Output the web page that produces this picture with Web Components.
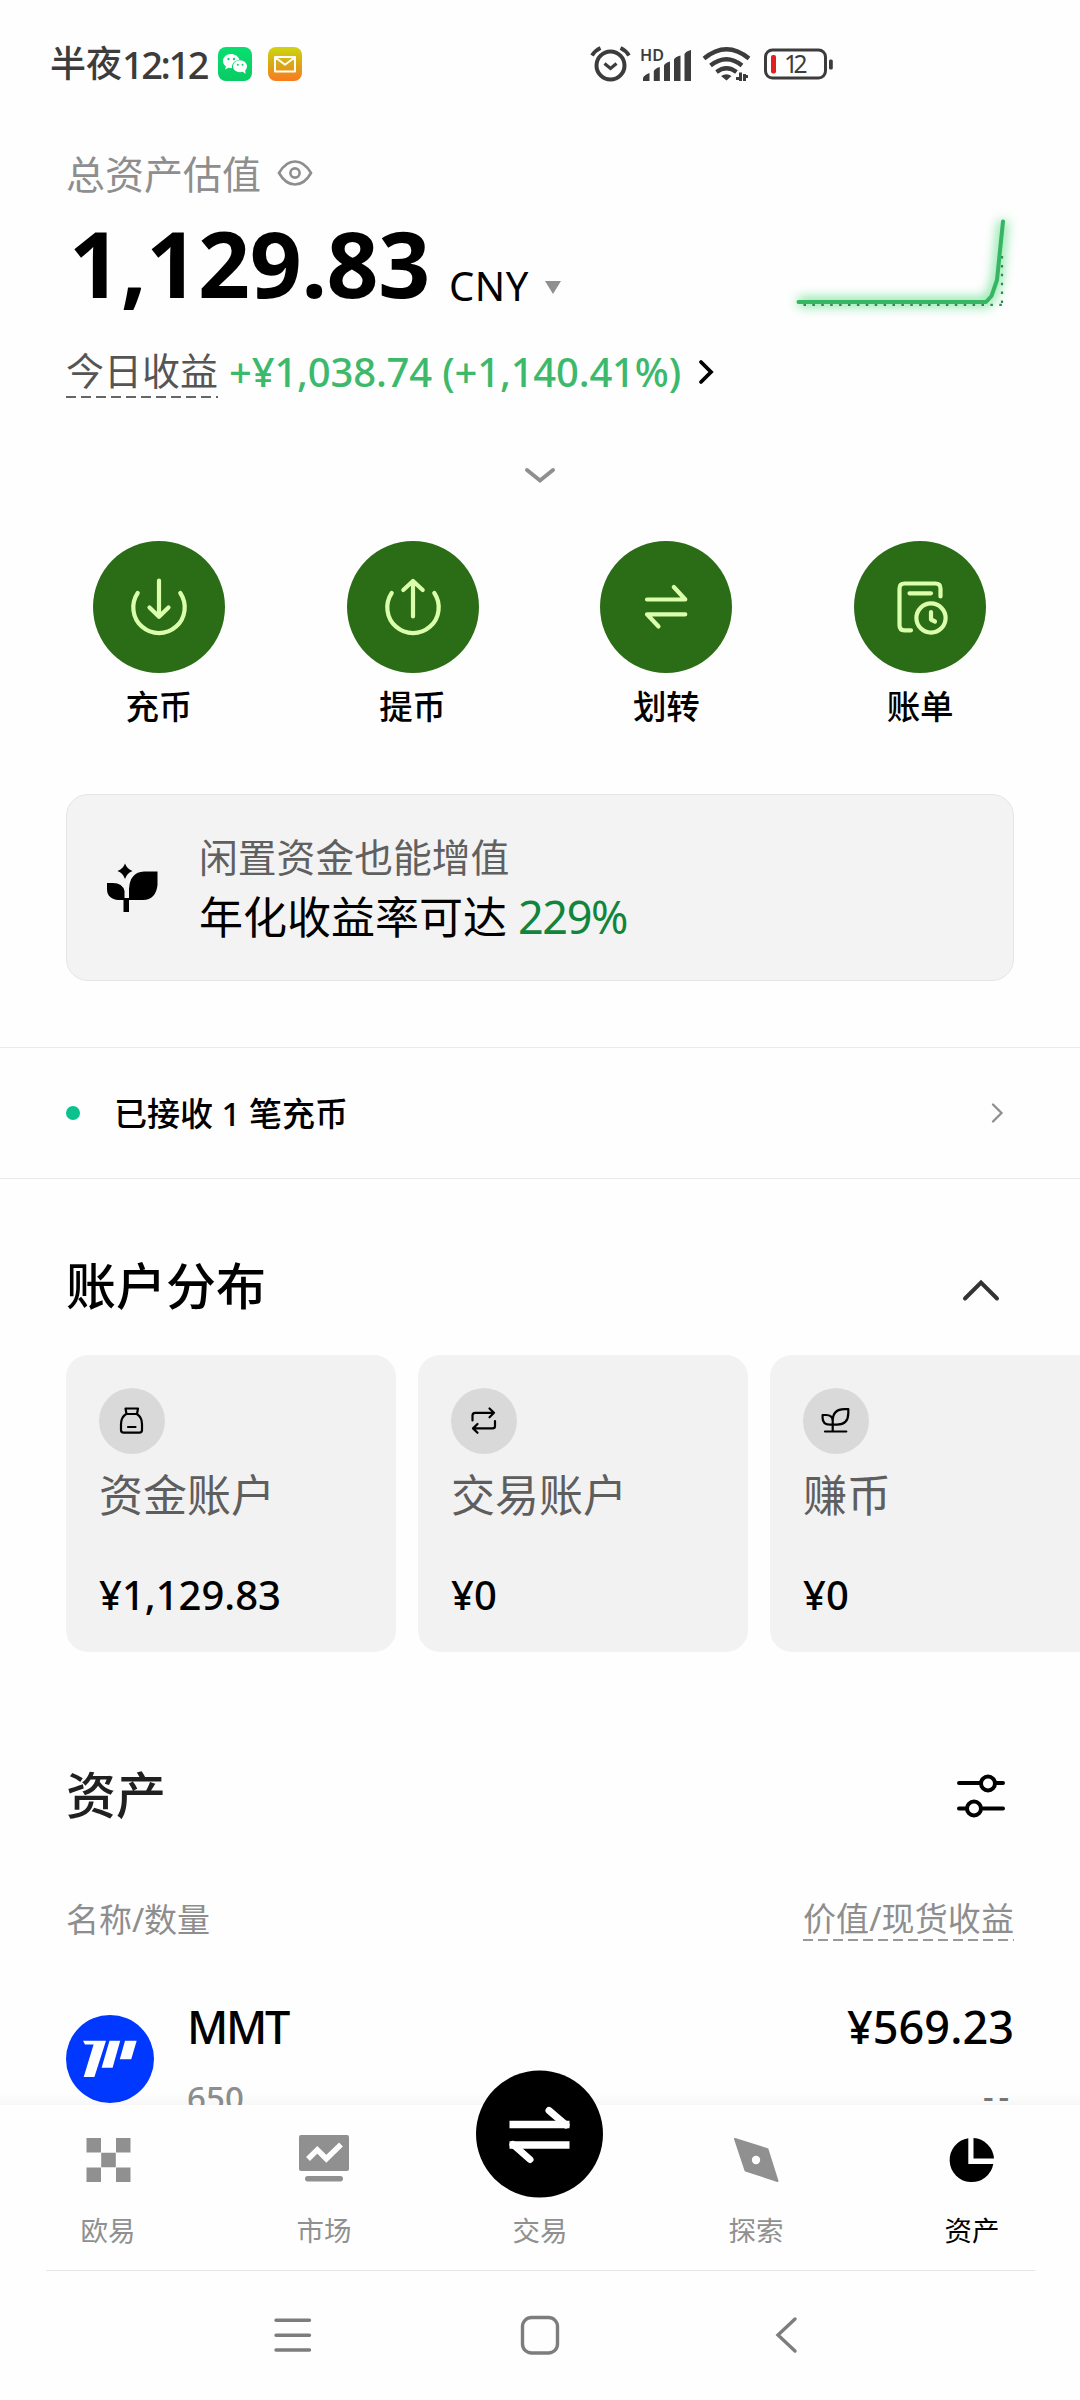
<!DOCTYPE html>
<html lang="zh-CN">
<head>
<meta charset="utf-8">
<title>资产</title>
<style>
html,body{margin:0;padding:0;background:#fefefe}
body{width:1080px;height:2400px;overflow:hidden;font-family:"Noto Sans","Noto Sans CJK SC",sans-serif;color:#000;line-height:1}
</style>
</head>
<body>
<wallet-app></wallet-app>
<script>
const define = (name, css, html, after) => customElements.define(name, class extends HTMLElement {
  constructor() {
    super();
    this.attachShadow({mode: 'open'});
  }
  connectedCallback() {
    const attr = n => this.getAttribute(n) || '';
    this.shadowRoot.innerHTML = `<style>:host{display:block;box-sizing:border-box}*{box-sizing:border-box}svg{display:block;flex:none;overflow:visible}${css}</style>` + (typeof html === 'function' ? html(attr) : html);
    if (after) after(this);
  }
});

const ICONS = {
  deposit: '<path d="M44.7 52A25.7 25.7 0 1 0 87.3 52M66 39.5V75.5M56.5 66.5L66 75.8L75.5 66.5"/>',
  withdraw: '<path d="M44.7 52A25.7 25.7 0 1 0 87.3 52M66 75.5V40M56.3 49L66 40L75.7 49"/>',
  transfer: '<path d="M47 58.5H85.3L73.8 46M85.3 73.3H47L58.5 85.5"/>',
  bill: '<path d="M86.5 55.5V47.5Q86.5 42.5 81.5 42.5H50.5Q45.5 42.5 45.5 47.5V84.3Q45.5 89.3 50.5 89.3H57M55.5 52.3H77M77 71V78.5L81 80.5"/><circle cx="77" cy="77" r="14.6"/>',
  jar: '<path d="M26.5 20.5H39L38 26H27.5ZM27.5 25.7Q22 29 22 36V42Q22 44.7 24.7 44.7H40.3Q43 44.7 43 42V36Q43 29 37.5 25.7M29 39H36.5"/>',
  swap: '<path d="M21.5 32.5V27.5Q21.5 24.8 24.2 24.8H43M38.5 20.5L43 24.8L38.5 29.3M44 33V38Q44 40.4 41.5 40.4H22M26.5 36L22 40.4L26.5 44.8"/>',
  sprout: '<path d="M29.7 43.3V33Q29.7 21.2 41.5 21.2H45.3V25Q45.3 36.6 34 36.6H27Q19.6 36.6 19.6 30V27H23Q29.7 27 29.7 33M22 43.5H43.3"/>'
};

/* Text whose letter spacing adapts so the run takes the width in "w" */
define('ui-text', ':host{display:inline-block;white-space:pre}', '<span><slot></slot></span>', el => {
  const w = parseFloat(el.getAttribute('w'));
  if (!w) return;
  const natural = el.shadowRoot.querySelector('span').getBoundingClientRect().width;
  el.style.letterSpacing = ((w - natural) / [...el.textContent].length) + 'px';
});

define('status-bar', `
:host{height:126px;display:flex;align-items:center;padding:2px 0 0 50px;color:#3c3c3c}
.time{font-size:36px;font-weight:500;display:flex;align-items:center;line-height:40px}
.time ui-text{font-size:38px}
.apps{display:flex;gap:16px;margin-left:11px}
.sys{display:flex;align-items:center;margin-left:289px}
`, `
<div class="time">半夜<ui-text w="85">12:12</ui-text></div>
<div class="apps">
<svg width="34" height="34" viewBox="0 0 34 34"><defs><linearGradient id="w" x2="0" y2="1"><stop stop-color="#08df70"/><stop offset="1" stop-color="#08cb64"/></linearGradient></defs><rect width="34" height="34" rx="8" fill="url(#w)"/><path d="M13 7C8.300 7 5 10.300 5 14c0 2.200 1 4.100 3 5.400L7 22.500l3.500-1.700c1 .3 2.200.4 3.500.3-.5-4.500 2.600-8 7.500-8.200C20.500 9.300 17 7 13 7Z" fill="#fff"/><ellipse cx="22" cy="19.300" rx="7" ry="6" fill="#fff"/><path d="M24 24l3.500 3-.3-4.500Z" fill="#fff"/><g fill="#08d56a"><circle cx="10.500" cy="12" r="1.200"/><circle cx="16" cy="12" r="1.200"/><circle cx="19.800" cy="17.800" r="1"/><circle cx="24.500" cy="17.800" r="1"/></g></svg>
<svg width="34" height="34" viewBox="0 0 34 34"><defs><linearGradient id="m" x2="0" y2="1"><stop stop-color="#cfd511"/><stop offset=".5" stop-color="#d9a918"/><stop offset="1" stop-color="#fa7a1e"/></linearGradient></defs><rect width="34" height="34" rx="8" fill="url(#m)"/><path d="M7 10H27V24.500H7ZM7.500 10.500L17 17.800L26.500 10.500" fill="none" stroke="#fff" stroke-width="1.900" stroke-linejoin="round"/></svg>
</div>
<div class="sys">
<svg width="39" height="36" viewBox="0 0 39 36" fill="none" stroke="#3c3c3c" stroke-width="4"><circle cx="19.500" cy="19.500" r="14"/><path d="M13.500 17.500L19.500 22.500L25.500 17.500" stroke-width="3.200"/><path d="M1 9.500Q4 4.500 9.500 2M38 9.500Q35 4.500 29.500 2" stroke-width="3.800"/></svg>
<svg width="52" height="36" viewBox="0 0 52 36" style="margin-left:10px" fill="#3c3c3c"><text x="0" y="14.500" font-size="16" font-weight="600" textLength="24" lengthAdjust="spacingAndGlyphs" font-family="Noto Sans">HD</text><path d="M3 32.500Q3 29.500 9.500 27V35H3ZM13.800 25.500Q14.500 22.500 19.800 21V35H13.800ZM24 19.500Q25 16.800 30 15.500V35H24ZM34 13.500Q35 10.800 40.500 9.500V35H34ZM44.500 8Q46 5 51 4V35H44.500Z"/></svg>
<svg width="47" height="36" viewBox="0 0 47 36" style="margin-left:11px" fill="none" stroke="#3c3c3c" stroke-width="4.300"><path d="M1 12.500Q23.500-6 46 12.500M7.500 19.500Q23.500 7 39 19.500M13.500 26Q23.500 18.500 33.500 26"/><path d="M18 30Q23.500 26.500 28.500 30L23.500 34.500Z" fill="#3c3c3c" stroke="none"/><path d="M37.500 26.500V35M33 32.500H37.500M41.500 35V28M41.500 30.500H45" stroke-width="3"/></svg>
<svg width="70" height="36" viewBox="0 0 70 36" style="margin-left:14px"><rect x="1.500" y="4" width="60" height="28" rx="7" fill="none" stroke="#3c3c3c" stroke-width="3"/><rect x="7" y="9" width="5" height="18.500" rx="2" fill="#e02020"/><rect x="65" y="13.500" width="3.800" height="10" rx="1.500" fill="#3c3c3c"/><text x="20" y="26.700" font-size="24.500" textLength="23.500" fill="#3c3c3c" font-family="Noto Sans">12</text></svg>
</div>`);

define('asset-summary', `
:host{padding:24px 66px 0;height:378px}
.label{display:flex;align-items:center;height:46px;font-size:39px;color:#8e8e8e;gap:16px}
.value{display:flex;align-items:baseline;height:100px;margin-top:20px;line-height:100px}
.num{font-size:91px;font-weight:700;margin-left:3px;transform:translateY(-3px)}
.cur{font-size:40px;margin-left:19px}
.tri{width:0;height:0;border:8.500px solid transparent;border-top:13px solid #8f8f8f;border-bottom:0;margin-left:16px;align-self:flex-start;margin-top:65px}
.chart{margin-left:auto;align-self:flex-start}
.today{display:flex;align-items:center;margin-top:30px;height:52px;font-size:38px;color:#555}
.dash{height:52px;line-height:49px;width:152px;background:repeating-linear-gradient(90deg,#666 0 10px,transparent 10px 15px) left bottom/100% 2px no-repeat}
.gain{font-size:40px;color:#3cb96b;font-weight:500;margin-left:11px;line-height:52px}
.today svg{margin-left:17px}
.more{display:block;margin:69px auto 0}
`, `
<div class="label"><span>总资产估值</span><svg width="36" height="28" viewBox="0 0 36 28" fill="none" stroke="#8e8e8e" stroke-width="2.600"><path d="M2 14C6 7 11.500 2.500 18 2.500S30 7 34 14C30 21 24.500 25.500 18 25.500S6 21 2 14Z"/><circle cx="18" cy="14" r="4.600"/></svg></div>
<div class="value"><ui-text class="num" w="361">1,129.83</ui-text><ui-text class="cur" w="80">CNY</ui-text><i class="tri"></i>
<svg class="chart" width="234" height="100" viewBox="780 216 234 100"><defs><filter id="g" x="-20%" y="-40%" width="140%" height="180%"><feGaussianBlur stdDeviation="5.500"/></filter></defs><path d="M798 302H986L991 297L997 280L1003 221" fill="none" stroke="#5fdc88" stroke-width="10" opacity=".75" filter="url(#g)"/><path d="M803.500 304.800H1003M1002 303V256" fill="none" stroke="#2d8a50" stroke-width="2.200" stroke-dasharray="2.500 6.400"/><path d="M798.500 302H986L991.500 296L997 280L1003 221.500" fill="none" stroke="#36b562" stroke-width="4" stroke-linecap="round" stroke-linejoin="round"/></svg></div>
<div class="today"><span class="dash">今日收益</span><ui-text class="gain" w="452">+¥1,038.74 (+1,140.41%)</ui-text><svg width="16" height="26" viewBox="0 0 16 26"><path d="M3 3L13 13L3 23" fill="none" stroke="#000" stroke-width="3.800" stroke-linecap="round"/></svg></div>
<svg class="more" width="32" height="18" viewBox="0 0 32 18"><path d="M3 3L16 13.500L29 3" fill="none" stroke="#8f8f8f" stroke-width="4" stroke-linecap="round"/></svg>`);

define('quick-action', `
:host{flex:1;display:flex;flex-direction:column;align-items:center;gap:12.500px;font-size:33.500px;font-weight:500;line-height:40px}
svg{background:#2b6c17;border-radius:50%}
span{height:41.500px}
`, a => `<svg width="132" height="132" viewBox="0 0 132 132" fill="none" stroke="#dcffab" stroke-width="4.200" stroke-linecap="round" stroke-linejoin="round">${ICONS[a('icon')]}</svg><span><slot></slot></span>`);

define('promo-banner', `
:host{margin:67px 66px 0;height:187px;border-radius:22px;background:#f3f3f3;border:1.500px solid #e5e5e5;display:flex;align-items:center;padding-left:39px}
.t{margin:3px 0 0 41px;display:flex;flex-direction:column;font-size:38.800px;color:#606060}
.t span{line-height:56px}
.b{font-size:44px;color:#000;line-height:64px!important;display:flex}
ui-text{color:#11853b;font-size:45px;margin-left:11px}
`, `<svg width="52" height="50" viewBox="106 862 52 50"><path d="M125 862.500Q127 868 132.500 870Q127 872 125 878Q123 872 117.500 870Q123 868 125 862.500ZM129 899V888Q130 871 144 870.500H157.500V884Q156 898.500 143 899ZM123.500 899Q107 900 107 888V882H113Q122.500 882 124.500 890V899ZM123.500 897H129V911H123.500Z"/></svg><div class="t"><span>闲置资金也能增值</span><span class="b">年化收益率可达<ui-text w="109">229%</ui-text></span></div>`);

define('notice-row', `
:host{margin-top:66px;height:132px;border:solid #eaeaea;border-width:1.500px 0;display:flex;align-items:center;padding:0 76px 0 66px;font-size:33px;font-weight:500}
i{width:14px;height:14px;border-radius:50%;background:#0bc18d;margin-right:34px}
svg{margin-left:auto}
`, `<i></i><ui-text w="233"><slot></slot></ui-text><svg width="14" height="22" viewBox="0 0 14 22"><path d="M3 2.500L11.500 11L3 19.500" fill="none" stroke="#8f8f8f" stroke-width="2.300" stroke-linecap="round"/></svg>`);

define('section-head', `
:host{display:flex;align-items:center;justify-content:space-between;height:60px;padding:0 66px;font-size:50px;font-weight:500}
`, `<span><slot></slot></span><slot name="icon"></slot>`);

define('account-card', `
:host{flex:none;width:330px;height:297px;border-radius:22px;background:#f2f2f2;padding:33px;display:flex;flex-direction:column}
svg{background:#d9d9d9;border-radius:50%}
.n{font-size:44px;color:#5e5e5e;line-height:60px;margin-top:11px}
.v{font-size:40px;font-weight:500;line-height:50px;margin-top:45px}
`, a => `<svg width="66" height="66" viewBox="0 0 66 66" fill="none" stroke="#000" stroke-width="2.200" stroke-linecap="round" stroke-linejoin="round">${ICONS[a('icon')]}</svg><span class="n">${a('name')}</span><div class="v"><ui-text w="${a('w')}"><slot></slot></ui-text></div>`);

define('asset-table', `
:host{padding:0 66px}
.h{display:flex;justify-content:space-between;font-size:33px;color:#8e8e8e;height:48px}
.h ui-text{line-height:46px}
.h .d{line-height:44px;height:44px;width:211px;background:repeating-linear-gradient(90deg,#999 0 10px,transparent 10px 15px) left bottom/100% 2px no-repeat}
.r{display:flex;margin-top:52px;font-size:45px}
.r svg{margin:18px 33px 0 0}
.c{display:flex;flex-direction:column}
.c>*{line-height:60px}
.m{font-weight:500}
.e{margin-left:auto;align-items:flex-end;font-weight:500}
.c .s{font-size:33px;color:#8e8e8e;margin-top:11px;font-weight:500;line-height:60px}
.e .s{margin-top:9px;color:#777}
`, `<div class="h"><ui-text w="144">名称/数量</ui-text><ui-text class="d" w="211">价值/现货收益</ui-text></div>
<div class="r"><svg width="88" height="88" viewBox="0 0 88 88"><circle cx="44" cy="44" r="44" fill="#0038ff"/><path d="M17 25.700H40L28.400 62H17.700L27.600 29.500H19ZM43.500 25.700H54.200L46.600 52.700H35.600ZM59 25.700H70.700L65.200 44.300H53.800Z" fill="#fff"/></svg>
<div class="c"><ui-text class="m" w="101">MMT</ui-text><ui-text class="s" w="57">650</ui-text></div>
<div class="c e"><ui-text w="167">¥569.23</ui-text><ui-text class="s" w="31">--</ui-text></div></div>`);

define('tab-item', `
:host{flex:1;display:flex;flex-direction:column;align-items:center;color:#909090;font-size:27.500px;padding-top:29px}
:host([active]){color:#000}
.i{height:50px}
.l{line-height:40px;margin-top:27px}
`, `<div class="i"><slot name="icon"></slot></div><span class="l"><slot></slot></span>`);

define('tab-bar', `
:host{height:166px;display:flex;position:relative;background:#fefefe;flex:none}
:host::before{content:"";position:absolute;left:0;right:0;top:-14px;height:14px;background:linear-gradient(transparent,rgba(0,0,0,.028))}
:host::after{content:"";position:absolute;left:46px;right:45px;bottom:0;height:1.500px;background:#e6e6e6}
svg{display:block}
.fab{margin-top:-64px;position:relative}
`, `
<tab-item><svg slot="icon" width="50" height="50" viewBox="0 0 50 50" fill="currentColor"><path d="M3.500 4H18V18.500H3.500ZM33 4H47.500V18.500H33ZM18.200 18.700H32.800V33.300H18.200ZM3.500 33.500H18V48H3.500ZM33 33.500H47.500V48H33Z"/></svg>欧易</tab-item>
<tab-item><svg slot="icon" width="50" height="50" viewBox="0 0 50 50"><rect y="1" width="50" height="36" rx="2" fill="currentColor"/><rect x="6" y="42" width="38" height="5.500" rx="2.700" fill="currentColor"/><path d="M9 25L18.300 15.800L27.300 24.800L42 10.500" fill="none" stroke="#fefefe" stroke-width="5.500"/></svg>市场</tab-item>
<tab-item><svg class="fab" slot="icon" width="128" height="128" viewBox="0 0 128 128"><circle cx="63.500" cy="64" r="63.500"/><g fill="none" stroke="#fff" stroke-width="7" stroke-linecap="round"><path d="M33.500 54.500H93.500M33.500 75H93.500" stroke-linecap="butt" stroke-width="7.500"/><path d="M73 40.500L90 55M37 74.500L54 89.500"/></g></svg>交易</tab-item>
<tab-item><svg slot="icon" width="50" height="50" viewBox="0 0 50 50"><path d="M4 5L36.500 15.200L46.500 47L14.500 36.500Z" fill="currentColor" stroke="currentColor" stroke-width="2" stroke-linejoin="round"/><circle cx="25" cy="26" r="4.200" fill="#fefefe"/></svg>探索</tab-item>
<tab-item active><svg slot="icon" width="50" height="50" viewBox="0 0 50 50"><path d="M21.300 4.300V30H46.300A22 22 0 1 1 21.300 4.300ZM26.500 4A22 22 0 0 1 47 24.500H26.500Z"/></svg>资产</tab-item>`);

define('nav-bar', `
:host{height:129px;flex:none;display:flex;align-items:center;justify-content:space-between;padding:0 268px 2px 268px}
`, `<svg width="50" height="50" viewBox="0 0 50 50" fill="none" stroke="#7d7d7d" stroke-width="3.400" stroke-linecap="round"><path d="M8 10.300H41.500M8 25.200H41.500M8 40H41.500"/></svg>
<svg width="50" height="50" viewBox="0 0 50 50" fill="none" stroke="#7d7d7d" stroke-width="3.400"><rect x="7.500" y="7.500" width="35" height="35.500" rx="9"/></svg>
<svg width="50" height="50" viewBox="0 0 50 50" fill="none" stroke="#7d7d7d" stroke-width="3.400" stroke-linecap="round"><path d="M33 9L16 25L33 41"/></svg>`);

define('wallet-app', `
:host{display:flex;flex-direction:column;height:2400px;width:1080px}
main{height:2105px;overflow:hidden;flex:none}
.actions{display:flex;padding:0 33px 0 32px;margin-top:37px}
.cards{display:flex;gap:22px;padding-left:66px;margin-top:39px;overflow:hidden}
`, `<main>
<status-bar></status-bar>
<asset-summary></asset-summary>
<div class="actions"><quick-action icon="deposit">充币</quick-action><quick-action icon="withdraw">提币</quick-action><quick-action icon="transfer">划转</quick-action><quick-action icon="bill">账单</quick-action></div>
<promo-banner></promo-banner>
<notice-row>已接收 1 笔充币</notice-row>
<section-head style="margin-top:77px">账户分布<svg slot="icon" width="66" height="60" viewBox="948 1256 66 60"><path d="M965 1298.500L981 1282.500L997 1298.500" fill="none" stroke="#333" stroke-width="4" stroke-linecap="round"/></svg></section-head>
<div class="cards"><account-card icon="jar" name="资金账户" w="180">¥1,129.83</account-card><account-card icon="swap" name="交易账户" w="46">¥0</account-card><account-card icon="sprout" name="赚币" w="46">¥0</account-card></div>
<section-head style="margin-top:113px;color:#202020">资产<svg slot="icon" width="66" height="60" viewBox="948 1765 66 60" fill="none" stroke="#000" stroke-width="4" stroke-linecap="round"><path d="M959 1783H980M997 1783H1003M959 1808.500H966M983 1808.500H1003"/><circle cx="988" cy="1783.500" r="7"/><circle cx="974" cy="1808.500" r="7"/></svg></section-head>
<asset-table style="margin-top:72px"></asset-table>
</main>
<tab-bar></tab-bar>
<nav-bar></nav-bar>`);
</script>
</body>
</html>
